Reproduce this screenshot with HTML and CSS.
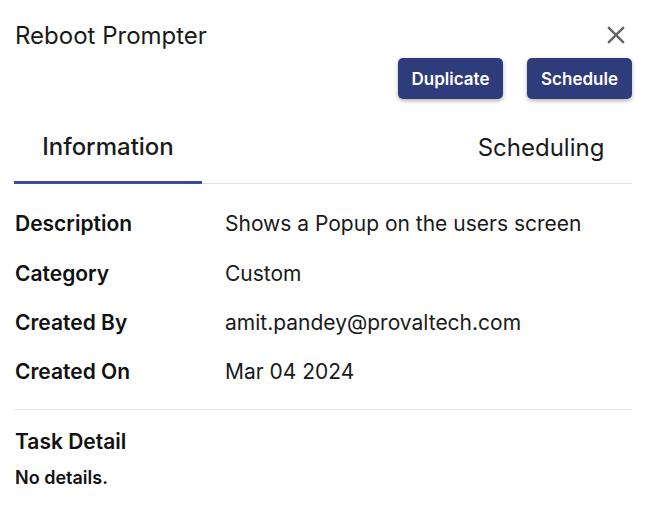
FILE: index.html
```html
<!DOCTYPE html>
<html>
<head>
<meta charset="utf-8">
<link rel="stylesheet" href="styles.css">
</head>
<body>
<div class="panel">
  <div class="header">
    <div class="title">Reboot Prompter</div>
    <button class="close" aria-label="Close">
      <svg viewBox="0 0 24 24" width="30" height="30"><path fill="#666" d="M19 6.41L17.59 5 12 10.59 6.41 5 5 6.41 10.59 12 5 17.59 6.41 19 12 13.41 17.59 19 19 17.59 13.41 12z"/></svg>
    </button>
  </div>
  <div class="actions">
    <button class="btn">Duplicate</button>
    <button class="btn">Schedule</button>
  </div>
  <div class="tabs">
    <div class="tab active">Information</div>
    <div class="tab">Scheduling</div>
  </div>
  <div class="info">
    <div class="row"><div class="label">Description</div><div class="value">Shows a Popup on the users screen</div></div>
    <div class="row"><div class="label">Category</div><div class="value">Custom</div></div>
    <div class="row"><div class="label">Created By</div><div class="value">amit.pandey@provaltech.com</div></div>
    <div class="row"><div class="label">Created On</div><div class="value">Mar 04 2024</div></div>
  </div>
  <div class="detail">
    <div class="detail-title">Task Detail</div>
    <div class="detail-body">No details.</div>
  </div>
</div>
</body>
</html>
```
FILE: styles.css
```css
* { box-sizing: border-box; }
html, body { margin: 0; padding: 0; background: #fff; }
body { font-family: Inter, "Noto Sans", sans-serif; color: #111; }
.panel { width: 656px; height: 516px; padding: 0 24px 0 14px; }
.header { display: flex; justify-content: space-between; align-items: flex-start; padding-top: 20px; }
.title { font-size: 24px; line-height: 30px; font-weight: 400; color: #1a1a1a; padding-left: 1px; padding-top: 1px; }
.close { border: 0; background: none; padding: 0; margin: 0 1px 0 0; width: 30px; height: 30px; display: flex; }
.actions { display: flex; justify-content: flex-end; gap: 24px; margin-top: 7px; }
.btn { height: 41px; width: 105px; border: 0; border-radius: 5px; background: #2e3c7c; color: #fff; font-family: Inter, sans-serif; font-size: 17px; font-weight: 600; box-shadow: 0 2px 4px rgba(0,0,0,0.3); padding: 0; }
.tabs { display: flex; justify-content: space-between; margin-top: 21px; border-bottom: 1px solid #e2e2e2; }
.tab { width: 188px; height: 63px; display: flex; align-items: center; justify-content: center; font-size: 24px; font-weight: 400; color: #1a1a1a; padding-bottom: 9px; padding-left: 6px; }
.tab.active { font-weight: 500; border-bottom: 3px solid #3a4a9f; margin-bottom: -1px; height: 64px; padding-left: 0; }
.info { padding: 15px 0 12px; border-bottom: 1px solid #e6e6e6; }
.row { display: flex; align-items: center; height: 49.4px; }
.label { width: 211px; padding-left: 1px; font-size: 21px; font-weight: 600; color: #111; }
.value { font-size: 21px; font-weight: 400; color: #1a1a1a; }
.detail { padding-top: 20px; }
.detail-title { font-size: 21px; font-weight: 600; line-height: 24px; padding-left: 1px; }
.detail-body { font-size: 18px; font-weight: 600; margin-top: 13px; padding-left: 1px; }
```
